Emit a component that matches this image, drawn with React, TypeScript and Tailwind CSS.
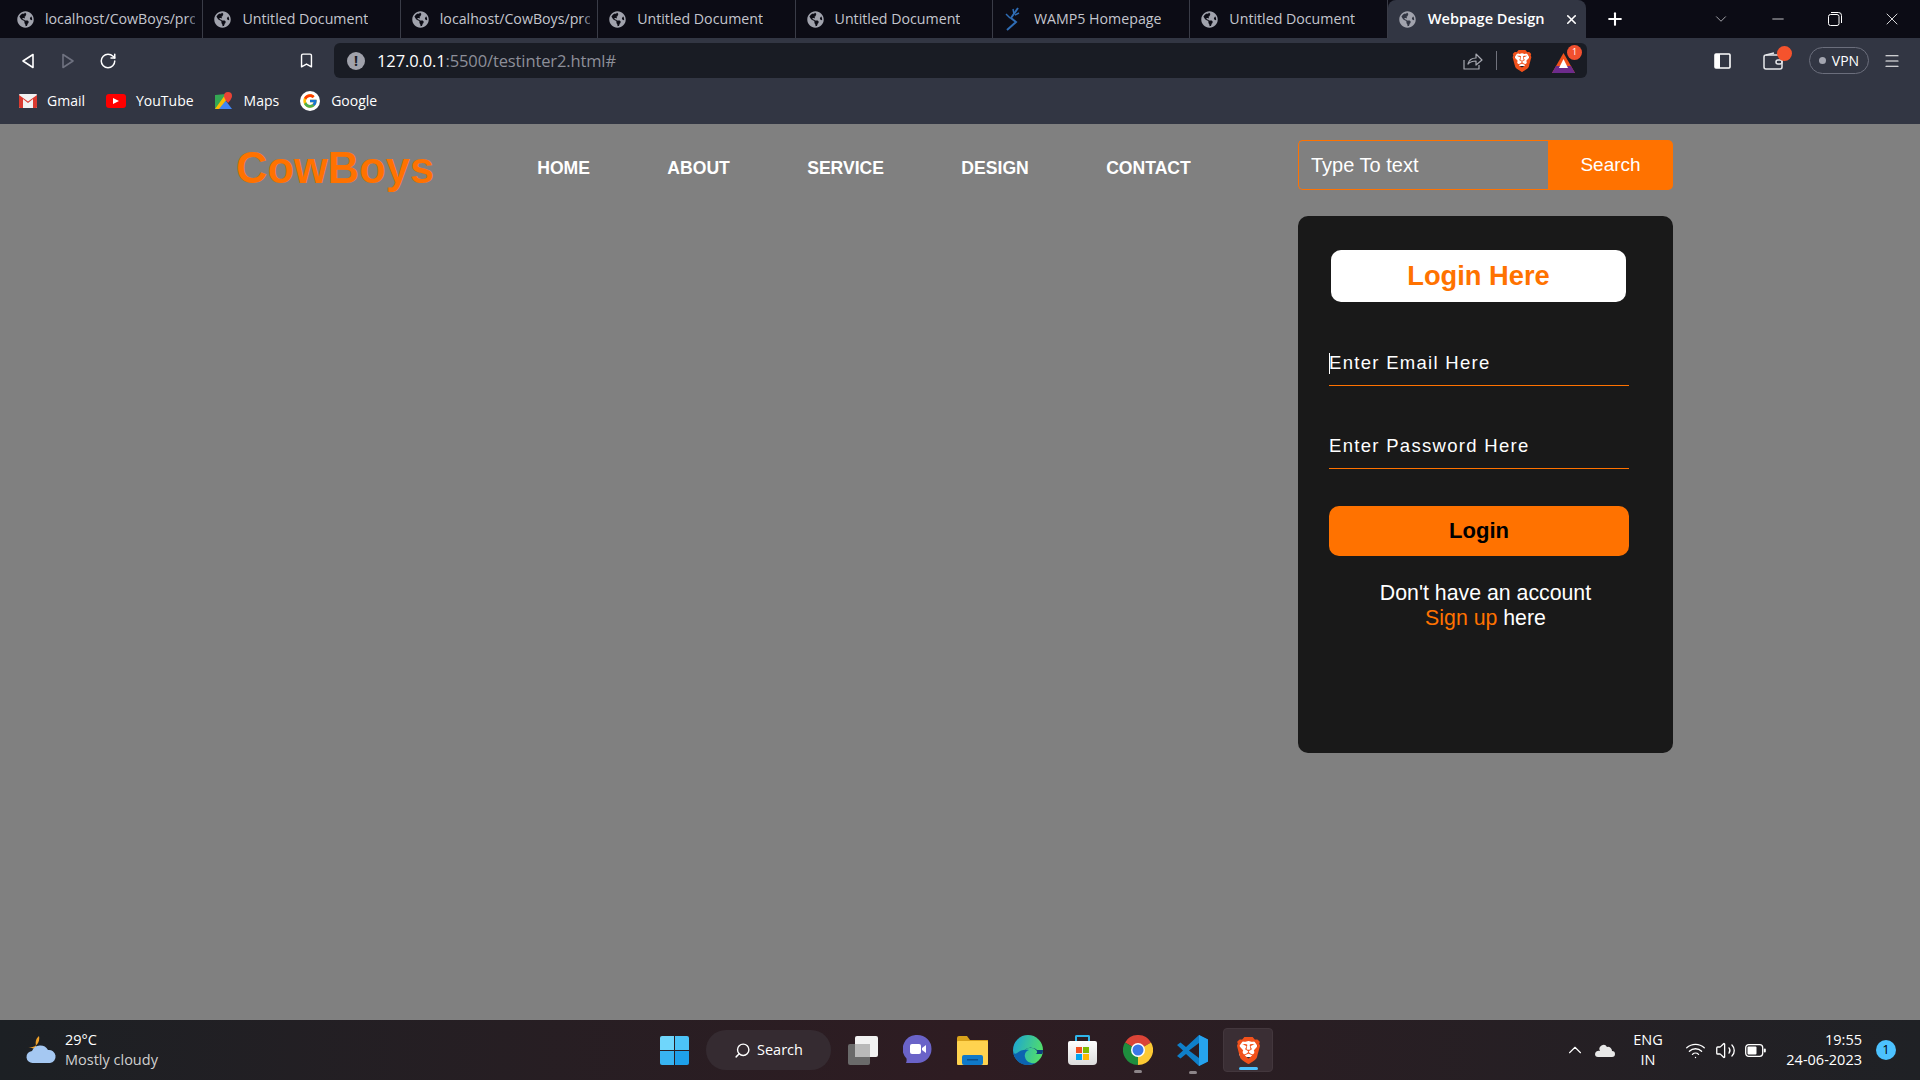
import { FaGlobeAmericas } from 'react-icons/fa';
import { FcGoogle } from 'react-icons/fc';
import { SiBrave } from 'react-icons/si';
import { ChevronDown, ChevronUp, Minus, Plus, X, Search, Bookmark, RotateCw, Menu, Wifi, Volume2 } from 'lucide-react';

const UI = 'font-["Open_Sans",sans-serif]';
const PAGE = 'font-["Liberation_Sans",Arial,sans-serif]';

const tabs = [
  { title: 'localhost/CowBoys/pro', clip: true },
  { title: 'Untitled Document' },
  { title: 'localhost/CowBoys/pro', clip: true },
  { title: 'Untitled Document' },
  { title: 'Untitled Document' },
  { title: 'WAMP5 Homepage', wamp: true },
  { title: 'Untitled Document' },
];

function BraveIcon({ size = 26 }: { size?: number }) {
  return (
    <span className="relative inline-flex items-center justify-center" style={{ width: size, height: size }}>
      <span className="absolute left-[18%] top-[15%] h-[60%] w-[64%] rounded-sm bg-white" />
      <SiBrave size={size} color="#f1511b" className="relative" />
    </span>
  );
}

function Tab({ title, clip, wamp }: { title: string; clip?: boolean; wamp?: boolean }) {
  return (
    <div className="relative flex h-[38px] w-[197.4px] shrink-0 items-center border-r border-[#3a3c47] pl-[11px]">
      {wamp ? (
        <svg className="-ml-[1px]" width="20" height="24" viewBox="0 0 20 24" fill="none" stroke="#2f6db5" strokeWidth="2">
          <path d="M15 1 8 11l5 4-9 8" />
          <path d="M3 7l4 4M10 2l1 5M16 6l-4 2" strokeWidth="1.5" />
        </svg>
      ) : (
        <FaGlobeAmericas size={17} color="#a1a3ad" />
      )}
      <span className={`mb-[1px] ml-[11px] overflow-hidden whitespace-nowrap text-[14.2px] text-[#c4c6ce] ${clip ? 'w-[150px]' : ''}`}>{title}</span>
      {clip && <span className="absolute right-0 top-0 h-full w-[16px] bg-gradient-to-r from-transparent to-[#0c0c15]" />}
    </div>
  );
}

function Tabstrip() {
  return (
    <div className="flex h-[38px] items-center bg-[#0c0c15] pl-[6px]">
      {tabs.map((t, i) => (
        <Tab key={i} {...t} />
      ))}
      <div className="flex h-[38px] w-[198px] shrink-0 items-center rounded-t-[8px] bg-[#323643] pl-[11px]">
        <FaGlobeAmericas size={17} color="#a1a3ad" />
        <span className="mb-[1px] ml-[12px] whitespace-nowrap text-[14.6px] font-semibold text-white">Webpage Design</span>
        <X size={15} strokeWidth={2.5} className="ml-[19px] text-white" />
      </div>
      <Plus size={20} strokeWidth={2.5} className="ml-[19px] text-white" />
      <ChevronDown size={18} strokeWidth={1} className="ml-[87px] text-[#d5d6da]" />
      <Minus size={18} strokeWidth={1} className="ml-[39px] text-white" />
      <svg className="ml-[41px]" width="14" height="14" viewBox="0 0 14 14" fill="none" stroke="white" strokeWidth="1">
        <rect x="0.5" y="2.5" width="10.5" height="11" rx="2" />
        <path d="M3 .5h7.5a3 3 0 0 1 3 3V11" />
      </svg>
      <X size={20} strokeWidth={1} className="ml-[40px] text-white" />
    </div>
  );
}

function Toolbar() {
  return (
    <div className="flex h-[44px] items-center bg-[#323643] pt-[1px]">
      <svg className="ml-[21px]" width="14" height="16" viewBox="0 0 14 16" fill="none" stroke="white" strokeWidth="1.6" strokeLinejoin="round">
        <path d="M12 1.5v13L2 8z" />
      </svg>
      <svg className="ml-[26px]" width="14" height="16" viewBox="0 0 14 16" fill="none" stroke="#6f7280" strokeWidth="1.6" strokeLinejoin="round">
        <path d="M2 1.5v13L12 8z" />
      </svg>
      <RotateCw size={18} strokeWidth={2} className="ml-[24px] text-white" />
      <Bookmark size={17} strokeWidth={2} className="ml-[181px] text-white" />
      <div className="ml-[19px] flex h-[35px] w-[1253px] items-center rounded-[6px] bg-[#191c24] pl-[13px]">
        <span className="flex h-[18px] w-[18px] items-center justify-center rounded-full bg-[#a0a2ab] text-[14px] font-bold leading-none text-[#191c24]">!</span>
        <span className="ml-[12px] mt-[1px] text-[16.5px] tracking-[-0.12px] text-white">
          127.0.0.1<span className="text-[#8d8f99]">:5500/testinter2.html#</span>
        </span>
        <svg className="ml-auto" width="20" height="19" viewBox="0 0 20 19" fill="none" stroke="#a6a8b0" strokeWidth="1.2" strokeLinejoin="round">
          <path d="M1 9v9h15v-4" />
          <path d="M5 13c1-4 4-6 8-6V3l6 6-6 5v-4c-3 0-6 1-8 3z" />
        </svg>
        <span className="ml-[13px] h-[19px] w-px bg-[#70727c]" />
        <span className="ml-[14px] flex"><BraveIcon size={22} /></span>
        <span className="relative ml-[19px] mr-[11px] flex h-[24px] w-[24px] items-end">
          <svg width="23" height="20" viewBox="0 0 23 20">
            <path d="M11.5 0 23 20H0z" fill="#f1511b" />
            <path d="M0 20l4-7h15l4 7z" fill="#6d2b8c" />
            <path d="M11.5 6 16 15H7z" fill="white" />
          </svg>
          <span className="absolute right-[-6px] top-[-4px] flex h-[15px] w-[15px] items-center justify-center rounded-full bg-[#f1502f] text-[9px] text-white">1</span>
        </span>
      </div>
      <svg className="ml-[127px]" width="17" height="16" viewBox="0 0 17 16">
        <rect x="1" y="1" width="15" height="14" rx="1" fill="none" stroke="white" strokeWidth="1.6" />
        <rect x="1" y="1" width="5" height="14" fill="white" />
      </svg>
      <span className="relative ml-[32px] flex">
        <svg width="20" height="18" viewBox="0 0 20 18" fill="none" stroke="#e6e7ea" strokeWidth="1.5">
          <rect x="1" y="3" width="18" height="14" rx="2" />
          <rect x="13" y="8" width="6" height="4" rx="2" />
          <path d="M3 3l8-2" />
        </svg>
        <span className="absolute right-[-9px] top-[-6px] h-[15px] w-[15px] rounded-full bg-[#f5532d]" />
      </span>
      <div className="ml-[26px] flex h-[27px] w-[60px] items-center justify-center gap-[6px] rounded-full border border-[#6b6e7c] text-[14px] text-white">
        <span className="h-[7px] w-[7px] rounded-full bg-[#a3a5b0]" />
        VPN
      </div>
      <Menu size={18} strokeWidth={1.6} className="ml-[14px] text-white" />
    </div>
  );
}

function Bookmarks() {
  return (
    <div className="flex h-[42px] items-center bg-[#323643] pb-[5px] pl-[19px] text-[14px] text-white">
      <svg width="18" height="14" viewBox="0 0 18 14">
        <rect width="18" height="14" rx="1" fill="#f2f2f2" />
        <path d="M0 1v12a1 1 0 0 0 1 1h3V5l5 4 5-4v9h3a1 1 0 0 0 1-1V1l-9 6.5z" fill="#d93a30" />
      </svg>
      <span className="ml-[10px]">Gmail</span>
      <span className="ml-[21px] flex h-[14px] w-[20px] items-center justify-center rounded-[3px] bg-[#f00]">
        <span className="h-0 w-0 border-y-[3.5px] border-l-[6px] border-y-transparent border-l-white" />
      </span>
      <span className="ml-[10px]">YouTube</span>
      <svg className="ml-[21px]" width="18" height="18" viewBox="0 0 18 18">
        <path d="M0 3l11-1v15H0z" fill="#34a853" />
        <path d="M0 17l11-8 6 8z" fill="#4285f4" />
        <path d="M0 17 10 3l2 4L4 17z" fill="#fbbc04" />
        <path d="M13 0a4 4 0 0 1 4 4c0 3-4 7-4 7s-4-4-4-7a4 4 0 0 1 4-4z" fill="#ea4335" />
      </svg>
      <span className="ml-[11px]">Maps</span>
      <span className="ml-[21px] flex h-[20px] w-[20px] items-center justify-center rounded-full bg-white">
        <FcGoogle size={16} />
      </span>
      <span className="ml-[11px]">Google</span>
    </div>
  );
}

function LoginCard() {
  return (
    <div className={`${PAGE} mt-[26px] h-[537px] w-[375px] rounded-[10px] bg-[#191919] pt-[34px]`}>
      <div className="ml-[33px] flex h-[52px] w-[295px] items-center justify-center rounded-[10px] bg-white text-[27.3px] font-bold text-[#ff7200]">
        Login Here
      </div>
      <div className="relative ml-[31px] mt-[38px] w-[300px]">
        <input
          placeholder="Enter Email Here"
          className="h-[46px] w-full border-b border-[#ff7200] bg-transparent text-[18.5px] tracking-[1.3px] text-white outline-none placeholder:text-white"
        />
        <span className="absolute left-0 top-[13px] h-[21px] w-px bg-white" />
      </div>
      <input
        placeholder="Enter Password Here"
        className="ml-[31px] mt-[37px] block h-[46px] w-[300px] border-b border-[#ff7200] bg-transparent text-[18.5px] tracking-[1.3px] text-white outline-none placeholder:text-white"
      />
      <button className="ml-[31px] mt-[37px] block h-[50px] w-[300px] rounded-[10px] bg-[#ff7200] pb-[2px] text-[22px] font-bold text-black">
        Login
      </button>
      <p className="mt-[25px] text-center text-[21.3px] leading-[25px] text-white">
        Don't have an account
        <br />
        <a href="#" className="text-[#ff7200]">Sign up</a> here
      </p>
    </div>
  );
}

function Page() {
  return (
    <div className="flex flex-1 justify-between bg-[#808080] pl-[236px] pr-[247px]">
      <div className={`${PAGE} flex h-[88px] items-center`}>
        <span className="mt-[1px] text-[43.5px] font-bold text-[#ff7200]">CowBoys</span>
        <nav className="ml-[103px] flex gap-[77.3px] text-[17.6px] font-bold text-white">
          <a href="#">HOME</a>
          <a href="#">ABOUT</a>
          <a href="#">SERVICE</a>
          <a href="#">DESIGN</a>
          <a href="#">CONTACT</a>
        </nav>
      </div>
      <div className="w-[375px] pt-[16px]">
        <div className={`${PAGE} flex h-[50px]`}>
          <input
            placeholder="Type To text"
            className="h-full w-[250px] rounded-l-[5px] border border-r-0 border-[#ff7200] bg-transparent pl-[12px] text-[20px] text-white outline-none placeholder:text-white"
          />
          <button className="flex-1 rounded-r-[5px] bg-[#ff7200] text-[19px] text-white">Search</button>
        </div>
        <LoginCard />
      </div>
    </div>
  );
}

function TaskIcons() {
  return (
    <div className="flex items-center">
      {/* start */}
      <div className="grid h-[29px] w-[29px] grid-cols-2 gap-[1px]">
        <span className="rounded-tl-[2px] bg-[#6fd6fb]" />
        <span className="rounded-tr-[2px] bg-[#4cc3f7]" />
        <span className="rounded-bl-[2px] bg-[#38b4f2]" />
        <span className="rounded-br-[2px] bg-[#1ea0ea]" />
      </div>
      <div className="ml-[17px] flex h-[40px] w-[125px] items-center justify-center gap-[6px] rounded-full bg-[#352b31] text-[14.5px] text-white">
        <Search size={17} className="-scale-x-100" />
        Search
      </div>
      {/* task view */}
      <svg className="ml-[17px]" width="30" height="29" viewBox="0 0 30 29">
        <rect x="0" y="8" width="22" height="21" rx="2" fill="#6a6a6a" />
        <rect x="7" y="0" width="23" height="21" rx="2" fill="#f2f2f2" />
        <rect x="7" y="8" width="15" height="13" fill="#b9b9b9" />
      </svg>
      {/* teams chat */}
      <svg className="ml-[25px]" width="29" height="30" viewBox="0 0 29 30">
        <path d="M14.5 0a14 14 0 0 1 0 28H3c0 0 1-2 .5-4.500A14 14 0 0 1 14.500 0z" fill="#6a63c8" />
        <rect x="7" y="9" width="11" height="10" rx="2" fill="white" />
        <path d="M19 13l4-3v8l-4-3z" fill="white" />
      </svg>
      {/* explorer */}
      <svg className="ml-[25px]" width="31" height="29" viewBox="0 0 31 29">
        <path d="M0 2a2 2 0 0 1 2-2h8l3 4h18v4H0z" fill="#d9a21b" />
        <rect x="0" y="5" width="31" height="24" rx="1" fill="#ffd34f" />
        <rect x="5" y="19" width="21" height="10" rx="2" fill="#0f79c9" />
        <rect x="10" y="23" width="11" height="1.500" fill="#0a4f8c" />
      </svg>
      {/* edge */}
      <svg className="ml-[25px]" width="30" height="30" viewBox="0 0 30 30">
        <defs>
          <linearGradient id="edgeA" x1="0" y1="0" x2="1" y2="0.3">
            <stop offset="0" stopColor="#1aa2d8" />
            <stop offset="1" stopColor="#50dc6e" />
          </linearGradient>
        </defs>
        <circle cx="15" cy="15" r="15" fill="url(#edgeA)" />
        <path d="M0 15C0 24 7 30 15 30c3 0 6-1 8-2-5 1-10-1-11-6-1-3 1-6 4-7-4-1-9 0-12 3-2 2-4 0-4-3z" fill="#0c63b0" />
        <path d="M12 15c2-3 8-3 11 0 2 2 1 4-1 4h7c1-1 1-3 1-4h-6c-3-3-9-3-12 0z" fill="#0f3f7e" />
      </svg>
      {/* store */}
      <div className="relative ml-[25px] h-[30px] w-[29px]">
        <span className="absolute left-[7px] top-0 h-[8px] w-[15px] rounded-t-[2px] border-2 border-b-0 border-[#2fb5ea]" />
        <div className="absolute bottom-0 left-0 flex h-[24px] w-[29px] items-center justify-center rounded-b-[4px] rounded-t-[2px] bg-gradient-to-b from-white to-[#dcdcdc]">
          <div className="grid h-[13px] w-[13px] grid-cols-2 gap-[1px]">
            <span className="bg-[#f25022]" />
            <span className="bg-[#7fba00]" />
            <span className="bg-[#00a4ef]" />
            <span className="bg-[#ffb900]" />
          </div>
        </div>
      </div>
      {/* chrome */}
      <div className="relative ml-[26px]">
        <svg width="30" height="30" viewBox="0 0 30 30">
          <path d="M15 15 2 7.500A15 15 0 0 1 28 7.500z" fill="#db4437" />
          <path d="M15 15 28 7.500A15 15 0 0 1 15 30z" fill="#fcc934" />
          <path d="M15 15 15 30A15 15 0 0 1 2 7.500z" fill="#1e8e3e" />
          <circle cx="15" cy="15" r="7" fill="white" />
          <circle cx="15" cy="15" r="5.500" fill="#3b78e7" />
        </svg>
        <span className="absolute bottom-[-8px] left-[11px] h-[3px] w-[8px] rounded-full bg-[#8d8589]" />
      </div>
      {/* vscode */}
      <div className="relative ml-[24px]">
        <svg width="31" height="31" viewBox="0 0 31 31">
          <path d="M22 0l9 4.500v22L22 31 9 19l-5.500 4.500L0 21l6-5.500L0 10l3.500-2.500L9 12z" fill="#0f7fc9" />
          <path d="M22 0l9 4.500v22L22 31z" fill="#26a3ee" />
          <path d="M22 8 12 15.500 22 23z" fill="#2b1c22" />
        </svg>
        <span className="absolute bottom-[-8px] left-[12px] h-[3px] w-[8px] rounded-full bg-[#8d8589]" />
      </div>
      {/* brave */}
      <div className="relative ml-[15px] flex h-[44px] w-[50px] items-center justify-center rounded-[4px] border border-[#43373d] bg-[#3a2e34]">
        <BraveIcon size={27} />
        <span className="absolute bottom-[1px] left-[15px] h-[3px] w-[19px] rounded-full bg-[#4cc2ff]" />
      </div>
    </div>
  );
}

function Tray() {
  return (
    <div className="ml-auto flex items-center text-white">
      <ChevronUp size={22} strokeWidth={1.2} />
      <svg className="ml-[9px]" width="20" height="13" viewBox="0 0 20 13">
        <path d="M5 7a4 4 0 0 1 7-4 4 4 0 0 1 5 4 3 3 0 0 1 3 3 3 3 0 0 1-3 3H3a3 3 0 0 1-3-3 3.500 3.500 0 0 1 5-3z" fill="#e8e8e8" />
      </svg>
      <div className="ml-[18px] w-[30px] text-center text-[14.5px] leading-[20px]">
        ENG
        <br />
        IN
      </div>
      <Wifi size={21} strokeWidth={1.5} className="ml-[22px]" />
      <Volume2 size={21} strokeWidth={1.5} className="ml-[9px]" />
      <svg className="ml-[9px]" width="21" height="13" viewBox="0 0 21 13">
        <rect x="0.700" y="0.700" width="17" height="11.600" rx="3" fill="none" stroke="white" strokeWidth="1.300" />
        <rect x="2.500" y="2.500" width="9" height="8" rx="1" fill="white" />
        <rect x="18.800" y="4.500" width="2" height="4" rx="1" fill="white" />
      </svg>
      <div className="ml-[18px] w-[78px] whitespace-nowrap text-right text-[14.5px] leading-[20px]">
        19:55
        <br />
        24-06-2023
      </div>
      <span className="ml-[14px] mr-[24px] flex h-[20px] w-[20px] items-center justify-center rounded-full bg-[#4cc2ff] text-[13px] text-black">1</span>
    </div>
  );
}

function Taskbar() {
  return (
    <div className="flex h-[60px] items-center bg-gradient-to-r from-[#1c2024] via-[#2e1c22] to-[#1f2125]">
      <div className="flex w-[660px] items-center pl-[25px] text-[14.5px] leading-[20px] text-white">
        <svg width="32" height="30" viewBox="0 0 32 30">
          <path d="M14 1a9 9 0 0 0 0 14L3 12a9 9 0 0 0 11-11z" fill="#f0a22a" />
          <path d="M8 28a6 6 0 0 1-1-12 9 9 0 0 1 16-1 6.500 6.500 0 0 1 2 13z" fill="#a5c8f2" />
        </svg>
        <div className="ml-[8px]">
          <div>29°C</div>
          <div className="text-[#d0d0d0]">Mostly cloudy</div>
        </div>
      </div>
      <TaskIcons />
      <Tray />
    </div>
  );
}

export default function App() {
  return (
    <div className={`${UI} flex h-[1080px] w-[1920px] flex-col overflow-hidden`}>
      <Tabstrip />
      <Toolbar />
      <Bookmarks />
      <Page />
      <Taskbar />
    </div>
  );
}
